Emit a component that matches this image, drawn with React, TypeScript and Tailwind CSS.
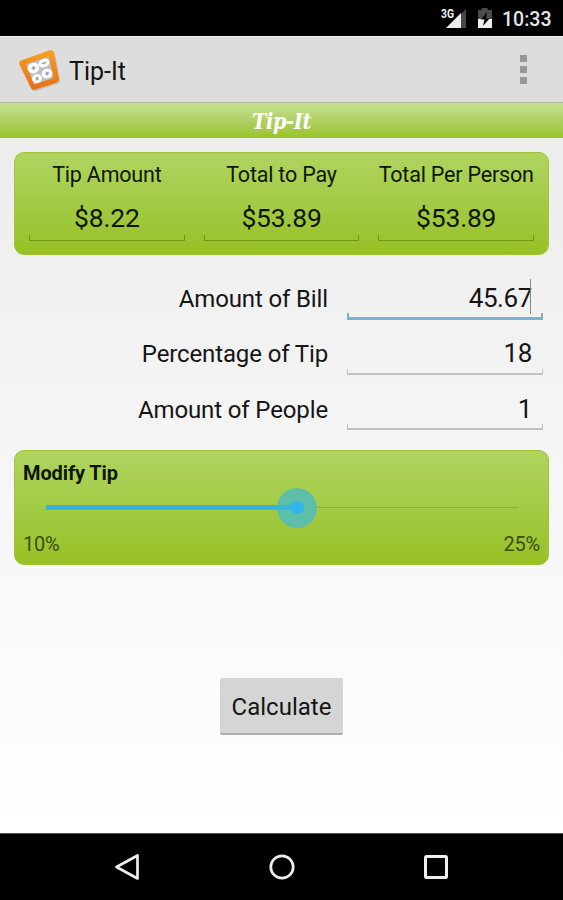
import React from 'react';

const results = [
  { label: 'Tip Amount', value: '$8.22' },
  { label: 'Total to Pay', value: '$53.89' },
  { label: 'Total Per Person', value: '$53.89' },
];

const fields = [
  { label: 'Amount of Bill', value: '45.67', focused: true },
  { label: 'Percentage of Tip', value: '18', focused: false },
  { label: 'Amount of People', value: '1', focused: false },
];

function SignalIcon() {
  return (
    <svg className="h-9 w-[30px]" viewBox="0 0 30 36">
      <path d="M9 28 28 9v19z" fill="#484848" />
      <path d="M8 28 23 13v15z" fill="#eee" />
      <path d="M0 6h15.500v12.500H0z" fill="#000" />
      <text x="3" y="17.500" textLength="13" lengthAdjust="spacingAndGlyphs" fill="#f0f0f0" className="text-[13.500px] font-bold">3G</text>
    </svg>
  );
}

function BatteryIcon() {
  return (
    <svg className="ml-[8px] h-9 w-[18px]" viewBox="0 0 18 36">
      <path d="M2 10h3.500V8h6v2H16v9H2z" fill="#4b4b4b" />
      <path d="M2 19h14v9H2z" fill="#eee" />
      <path d="M11 12 5 19.500h3.500L7 26l6.500-7.500H10z" fill="#000" />
    </svg>
  );
}

function AppIcon() {
  return (
    <svg className="h-[42px] w-[42px]" viewBox="0 0 42 42">
      <defs>
        <linearGradient id="frame" x1="0" y1="0" x2="0" y2="1">
          <stop offset="0" stopColor="#f9a01f" />
          <stop offset="1" stopColor="#e96e19" />
        </linearGradient>
      </defs>
      <path d="M2.500 12.500 32.500 2Q35 1.500 35.700 4L41 31.500Q41 34 38.500 34.500L17 42Q13.800 42.800 12.500 40L.8 16Q0 13.500 2.500 12.500z" fill="#b5a99e" opacity=".65" />
      <path d="M2 11.500 31.500 1Q34 .5 34.700 3L40 30Q40.200 32.500 37.800 33.500L16 40.500Q13 41.300 11.700 38.500L.3 15Q-.2 12.500 2 11.500z" fill="url(#frame)" />
      <path d="M7 15 30 7.500 34.500 29 15 35.500z" fill="#bbbfc2" />
      <g fill="#fafafa">
        <ellipse cx="14.500" cy="19" rx="6" ry="5.200" transform="rotate(-20 14.500 19)" />
        <ellipse cx="25" cy="14" rx="5.600" ry="4.300" transform="rotate(-20 25 14)" />
        <ellipse cx="18" cy="29.500" rx="5" ry="4.500" transform="rotate(-20 18 29.500)" />
        <ellipse cx="28" cy="24.500" rx="5.400" ry="4.900" transform="rotate(-20 28 24.500)" />
      </g>
      <g stroke="#a0a4a8" strokeWidth="1.600" strokeLinecap="round">
        <path d="m13.300 19.400 2.600-.8M14.200 17.800l.7 2.500M23.600 14.500l3-1M17.400 28.800l1.400 1.500M18.700 28.500l-1.200 2.100M26.800 24.900l2.600-.8M27.700 23.300l.7 2.400" />
      </g>
    </svg>
  );
}

function TopBar() {
  return (
    <div className="flex h-9 shrink-0 items-center justify-end bg-black pr-[11px] text-[#e6e6e6]">
      <SignalIcon />
      <BatteryIcon />
      <span className="ml-[8px] mt-[3px] w-[50px] whitespace-nowrap text-[19.500px] font-medium leading-none">10:33</span>
    </div>
  );
}

export default function App() {
  return (
    <div className="flex h-[900px] w-[563px] flex-col overflow-hidden bg-black font-['Roboto',sans-serif] text-[#151515]">
      <TopBar />
      <header className="flex h-[66px] shrink-0 items-center border-t border-[#efefef] bg-[#dddddd] pl-[19px] pr-9">
        <AppIcon />
        <h1 className="ml-[8px] mt-[3px] text-[25px] leading-none">Tip-It</h1>
        <div className="ml-auto flex flex-col gap-[4px]">
          <i className="size-[7px] bg-[#999]" />
          <i className="size-[7px] bg-[#999]" />
          <i className="size-[7px] bg-[#999]" />
        </div>
      </header>
      <div className="flex h-9 shrink-0 items-center justify-center border-t border-[#adb99b] bg-linear-to-b from-[#c5df91] to-[#9ac322] pt-[3px] font-['DejaVu_Serif_Condensed','DejaVu_Serif',serif] text-[21.500px] font-bold italic tracking-[-0.4px] text-white">
        Tip-It
      </div>

      <main className="flex h-[695px] shrink-0 flex-col bg-linear-to-b from-[#ededee] to-white px-[14px] pt-[14px]">
        <section className="flex h-[103px] shrink-0 gap-[19px] rounded-[10px] border border-[#9fc533] bg-linear-to-b from-[#b0d45f] to-[#97c122] px-[14px] pt-[9px]">
          {results.map((result) => (
            <div key={result.label} className="flex w-[156px] flex-col items-center text-[#0d1700]">
              <span className="flex h-[27px] items-center whitespace-nowrap text-[21.500px] tracking-[-0.2px]">{result.label}</span>
              <span className="mt-[14px] flex h-[30px] items-center text-[26.500px] tracking-[-0.2px]">{result.value}</span>
              <span className="mt-[2px] h-[6px] w-full border border-t-0 border-[#719819]" />
            </div>
          ))}
        </section>

        <section className="mt-[16px] flex flex-col">
          {fields.map((field) => (
            <div key={field.label} className="flex h-[55.500px] justify-end pr-[6px]">
              <label className="mr-[19px] flex h-[55px] items-center whitespace-nowrap text-[24px] tracking-[-0.13px]">{field.label}</label>
              <div className="relative flex h-[51px] w-[196px] items-center justify-end pr-[11px] pt-[3px] text-[26px] tracking-[-0.4px]">
                {field.value}
                {field.focused && <i className="absolute right-[12px] top-[8px] h-[35px] w-px bg-[#888]" />}
                {field.focused ? (
                  <i className="absolute inset-x-0 bottom-[2px] h-[7px] border-x-2 border-b-[3px] border-[#77b2d5]" />
                ) : (
                  <i className="absolute inset-x-0 bottom-[3px] h-[6px] border-x border-b-2 border-[#c1c1c1]" />
                )}
              </div>
            </div>
          ))}
        </section>

        <section className="mt-[12px] flex h-[115px] shrink-0 flex-col rounded-[10px] border border-[#9fc533] bg-linear-to-b from-[#b0d45f] to-[#97c122] px-[8px] pt-[9px]">
          <h2 className="h-[27px] text-[20px] font-bold leading-[26px] tracking-[-0.1px] text-[#0d1700]">Modify Tip</h2>
          <div className="ml-[23px] mt-px flex h-10 w-[472px] items-center">
            <div className="h-[5px] w-[231px] bg-[#32b5df]" />
            <div className="flex size-10 items-center rounded-full bg-[#5dbeaa]">
              <div className="h-[5px] w-5 bg-[#32b5df]" />
              <div className="-ml-[6px] size-[13px] rounded-full bg-[#32b5e9]" />
            </div>
            <div className="h-px flex-1 bg-[#8eae3c]" />
          </div>
          <div className="mt-[3px] flex justify-between text-[20px] leading-[26px] tracking-[-0.2px] text-[#395010]">
            <span>10%</span>
            <span>25%</span>
          </div>
        </section>

        <button className="mt-[113px] flex h-[57px] w-[123px] items-center justify-center self-center rounded-[2px] border-b-2 border-[#adadad] bg-[#d5d5d5] pt-[3px] text-[24px]">Calculate</button>
      </main>

      <nav className="flex h-[67px] shrink-0 items-center justify-between border-t border-[#555] bg-black px-[114px]">
        <svg className="size-[26px]" viewBox="0 0 26 26" fill="none" stroke="#eeeeee" strokeWidth="2.700" strokeLinejoin="round"><path d="M2.500 13 23.500 1.500v23z" /></svg>
        <svg className="size-[26px]" viewBox="0 0 26 26" fill="none" stroke="#eeeeee" strokeWidth="2.700"><circle cx="13" cy="13" r="11.200" /></svg>
        <svg className="size-[26px]" viewBox="0 0 26 26" fill="none" stroke="#eeeeee" strokeWidth="3"><rect x="2.500" y="2.500" width="21" height="21" rx="1" /></svg>
      </nav>
    </div>
  );
}
